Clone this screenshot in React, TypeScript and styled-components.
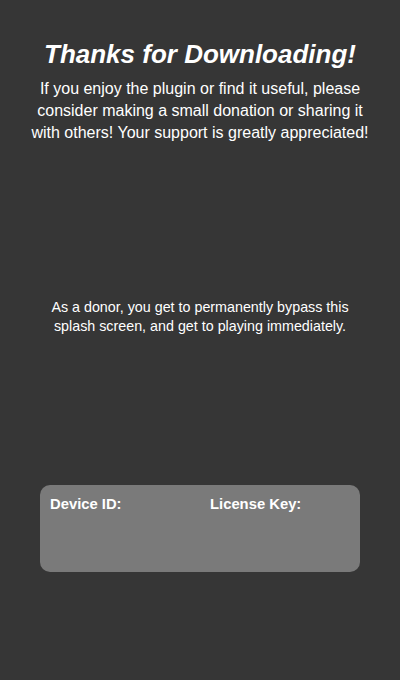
import React from "react";
import styled, { createGlobalStyle } from "styled-components";

const Global = createGlobalStyle`
  html, body {
    margin: 0;
    padding: 0;
    background: #363636;
  }
  body {
    font-family: "Liberation Sans", Arial, sans-serif;
    color: #ffffff;
  }
`;

const Splash = styled.div`
  width: 400px;
  height: 680px;
  display: flex;
  flex-direction: column;
  align-items: center;
  background: #363636;
  box-sizing: border-box;
  padding-top: 38px;
`;

const Title = styled.h1`
  margin: 0;
  font-size: 26px;
  font-weight: 700;
  font-style: italic;
  line-height: 32px;
  text-align: center;
`;

const Blurb = styled.p`
  margin: 8px 0 0;
  width: 340px;
  font-size: 16px;
  line-height: 22px;
  text-align: center;
`;

const DonorNote = styled.p`
  margin: 154px 0 0;
  width: 310px;
  font-size: 14.3px;
  line-height: 19px;
  text-align: center;
`;

const KeyCard = styled.div`
  margin-top: 149px;
  width: 320px;
  height: 87px;
  border-radius: 10px;
  background: #7a7a7a;
  display: grid;
  grid-template-columns: 1fr 1fr;
`;

const KeyField = styled.div`
  padding: 10px;
`;

const KeyLabel = styled.span`
  font-size: 14.8px;
  font-weight: 700;
  line-height: 16px;
`;

const App: React.FC = () => {
  return (
    <Splash>
      <Global />
      <Title>Thanks for Downloading!</Title>
      <Blurb>
        If you enjoy the plugin or find it useful, please consider making a
        small donation or sharing it with others! Your support is greatly
        appreciated!
      </Blurb>
      <DonorNote>
        As a donor, you get to permanently bypass this splash screen, and get
        to playing immediately.
      </DonorNote>
      <KeyCard>
        <KeyField>
          <KeyLabel>Device ID:</KeyLabel>
        </KeyField>
        <KeyField>
          <KeyLabel>License Key:</KeyLabel>
        </KeyField>
      </KeyCard>
    </Splash>
  );
};

export default App;
